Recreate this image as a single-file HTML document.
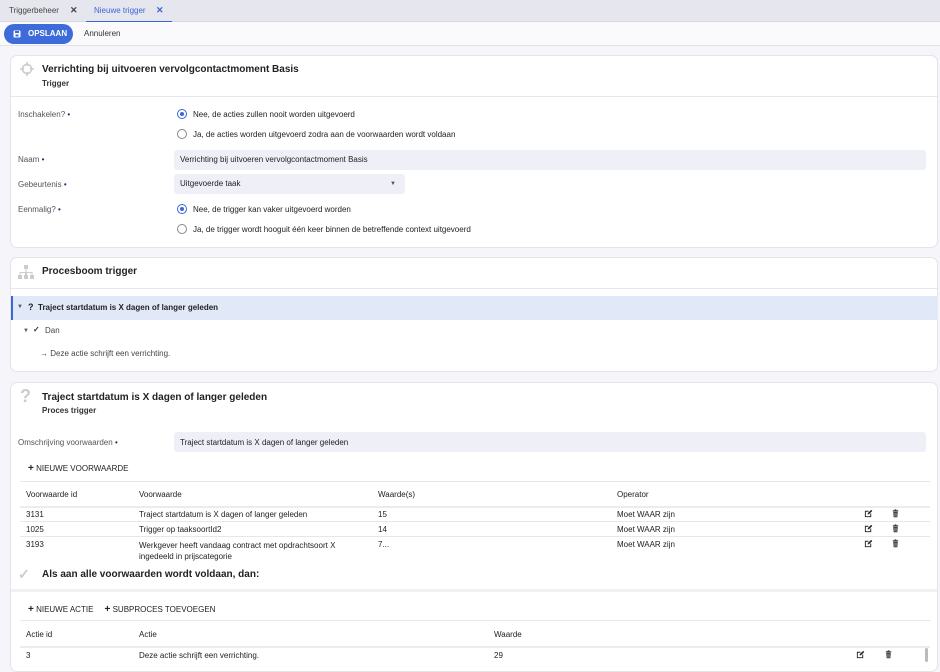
<!DOCTYPE html>
<html><head><meta charset="utf-8"><style>
*{box-sizing:border-box;margin:0;padding:0}
body{width:940px;height:662px;overflow:hidden;background:#f6f5fa;font-family:"Liberation Sans",sans-serif;font-size:8px;color:#222;position:relative}
.abs{position:absolute}
.tabs{left:0;top:0;width:940px;height:22px;background:#e6e6ee;border-bottom:1px solid #d8d8e0}
.tool{left:0;top:22px;width:940px;height:24px;background:#fafafd;border-bottom:1px solid #e2e2ea}
.card{position:absolute;left:10px;width:928px;background:#fff;border:1px solid #e3e3ea;border-radius:7px}
.t{position:absolute;white-space:nowrap}
.lbl{color:#555}
.req{color:#1a2a6a}
.radio{position:absolute;width:10px;height:10px;border-radius:50%;border:1px solid #888;background:#fff}
.radio.on{border-color:#3a66d6}
.radio.on:after{content:"";position:absolute;left:2px;top:2px;width:4px;height:4px;border-radius:50%;background:#3a66d6}
.inp{position:absolute;background:#efeff8;border-radius:3px}
.hr{position:absolute;height:1px;background:#e6e6ee}
.b{font-weight:bold}
.h{font-size:10px;font-weight:bold;color:#222}
</style></head><body>
<svg width="0" height="0" style="position:absolute"><defs>
<symbol id="ed" viewBox="0 0 10 10"><path d="M1 2h4v1H2v5h5V5h1v4H1z" fill="#222"/><path d="M4 6l0.3-1.5L8 1l1.2 1.2L5.5 5.8z" fill="#222"/></symbol>
<symbol id="tr" viewBox="0 0 10 10"><rect x="2" y="1.5" width="6" height="1.2" fill="#222"/><rect x="4" y="0.5" width="2" height="1" fill="#222"/><path d="M2.6 3.2h4.8l-0.4 6H3z" fill="#222"/><path d="M4 4v4.5M5 4v4.5M6 4v4.5" stroke="#fff" stroke-width="0.4"/></symbol>
</defs></svg>
<div class="abs tabs"></div>
<div class="t" style="left:9px;top:6px;color:#444">Triggerbeheer</div>
<div class="t b" style="left:70px;top:5px;color:#444;font-size:9px">✕</div>
<div class="t" style="left:94px;top:6px;color:#3a66d6">Nieuwe trigger</div>
<div class="t b" style="left:156px;top:5px;color:#3a66d6;font-size:9px">✕</div>
<div class="abs" style="left:86px;top:21px;width:86px;height:1px;background:#3a66d6"></div>
<div class="abs tool"></div>
<div class="abs" style="left:4px;top:24px;width:69px;height:20px;border-radius:10px;background:#3d6bd9"></div>
<svg class="abs" style="left:13px;top:30px" width="8" height="8" viewBox="0 0 8 8"><rect x="0.5" y="0.5" width="7" height="7" rx="1" fill="#fff"/><rect x="2" y="1" width="4" height="2" fill="#3d6bd9"/><rect x="2.5" y="4.5" width="3" height="2" fill="#3d6bd9"/></svg>
<div class="t b" style="left:28px;top:29px;color:#fff">OPSLAAN</div>
<div class="t" style="left:84px;top:29px;color:#333">Annuleren</div>

<div class="card" style="top:55px;height:193px"></div>
<svg class="abs" style="left:20px;top:62px" width="14" height="14" viewBox="0 0 14 14"><circle cx="7" cy="7" r="4.5" fill="none" stroke="#ccc" stroke-width="1.6"/><path d="M7 0v4M7 10v4M0 7h4M10 7h4" stroke="#ccc" stroke-width="1.6"/></svg>
<div class="t h" style="left:42px;top:64px">Verrichting bij uitvoeren vervolgcontactmoment Basis</div>
<div class="t b" style="left:42px;top:79px;color:#333">Trigger</div>
<div class="hr" style="left:11px;top:96px;width:926px"></div>
<div class="t lbl" style="left:18px;top:110px">Inschakelen? <span class="req">•</span></div>
<div class="radio on" style="left:177px;top:109px"></div><div class="t" style="left:193px;top:110px">Nee, de acties zullen nooit worden uitgevoerd</div>
<div class="radio" style="left:177px;top:129px"></div><div class="t" style="left:193px;top:130px">Ja, de acties worden uitgevoerd zodra aan de voorwaarden wordt voldaan</div>
<div class="t lbl" style="left:18px;top:155px">Naam <span class="req">•</span></div>
<div class="inp" style="left:174px;top:150px;width:752px;height:20px"></div>
<div class="t" style="left:180px;top:155px">Verrichting bij uitvoeren vervolgcontactmoment Basis</div>
<div class="t lbl" style="left:18px;top:180px">Gebeurtenis <span class="req">•</span></div>
<div class="inp" style="left:174px;top:174px;width:231px;height:20px"></div>
<div class="t" style="left:180px;top:179px">Uitgevoerde taak</div>
<div class="t" style="left:390px;top:181px;font-size:6px;color:#555">▼</div>
<div class="t lbl" style="left:18px;top:205px">Eenmalig? <span class="req">•</span></div>
<div class="radio on" style="left:177px;top:204px"></div><div class="t" style="left:193px;top:205px">Nee, de trigger kan vaker uitgevoerd worden</div>
<div class="radio" style="left:177px;top:224px"></div><div class="t" style="left:193px;top:225px">Ja, de trigger wordt hooguit één keer binnen de betreffende context uitgevoerd</div>

<div class="card" style="top:257px;height:115px"></div>
<svg class="abs" style="left:17px;top:265px" width="18" height="14" viewBox="0 0 18 14"><g fill="#ccc"><rect x="7" y="0" width="4" height="4"/><rect x="1" y="10" width="4" height="4"/><rect x="7" y="10" width="4" height="4"/><rect x="13" y="10" width="4" height="4"/><path d="M8.5 4h1v3h6v3h-1V8H10v2H8V8H3.5v2h-1V7h6z"/></g></svg>
<div class="t h" style="left:42px;top:266px">Procesboom trigger</div>
<div class="hr" style="left:11px;top:288px;width:926px"></div>
<div class="abs" style="left:11px;top:296px;width:927px;height:24px;background:#e1e9f9;border-left:2px solid #3a66d6"></div>
<div class="t" style="left:17px;top:304px;font-size:6px;color:#555">▼</div>
<div class="t b" style="left:28px;top:302px;font-size:9px">?</div>
<div class="t b" style="left:38px;top:303px">Traject startdatum is X dagen of langer geleden</div>
<div class="t" style="left:23px;top:328px;font-size:6px;color:#555">▼</div>
<div class="t b" style="left:33px;top:325px;color:#333">✓</div>
<div class="t" style="left:45px;top:326px;color:#444">Dan</div>
<div class="t" style="left:40px;top:349px;color:#444">→ Deze actie schrijft een verrichting.</div>

<div class="card" style="top:382px;height:290px"></div>
<div class="t b" style="left:20px;top:386px;font-size:18px;color:#ccc">?</div>
<div class="t h" style="left:42px;top:392px">Traject startdatum is X dagen of langer geleden</div>
<div class="t b" style="left:42px;top:406px;color:#333">Proces trigger</div>
<div class="t lbl" style="left:18px;top:438px">Omschrijving voorwaarden <span class="req">•</span></div>
<div class="inp" style="left:174px;top:432px;width:752px;height:20px"></div>
<div class="t" style="left:180px;top:438px">Traject startdatum is X dagen of langer geleden</div>
<div class="t" style="left:28px;top:463px"><b style="font-size:10px">+</b> NIEUWE VOORWAARDE</div>
<div class="hr" style="left:20px;top:481px;width:910px"></div>
<div class="t" style="left:26px;top:490px">Voorwaarde id</div><div class="t" style="left:139px;top:490px">Voorwaarde</div><div class="t" style="left:378px;top:490px">Waarde(s)</div><div class="t" style="left:617px;top:490px">Operator</div>
<div class="abs" style="left:20px;top:506px;width:910px;height:2px;background:#ebebf0"></div>
<div class="t" style="left:26px;top:510px">3131</div><div class="t" style="left:139px;top:510px">Traject startdatum is X dagen of langer geleden</div><div class="t" style="left:378px;top:510px">15</div><div class="t" style="left:617px;top:510px">Moet WAAR zijn</div>
<div class="hr" style="left:20px;top:521px;width:910px"></div>
<div class="t" style="left:26px;top:525px">1025</div><div class="t" style="left:139px;top:525px">Trigger op taaksoortId2</div><div class="t" style="left:378px;top:525px">14</div><div class="t" style="left:617px;top:525px">Moet WAAR zijn</div>
<div class="hr" style="left:20px;top:536px;width:910px"></div>
<div class="t" style="left:26px;top:540px">3193</div><div class="t" style="left:139px;top:540px;line-height:11px">Werkgever heeft vandaag contract met opdrachtsoort X<br>ingedeeld in prijscategorie</div><div class="t" style="left:378px;top:540px">7...</div><div class="t" style="left:617px;top:540px">Moet WAAR zijn</div>
<svg class="abs" style="left:864px;top:509px" width="9" height="9"><use href="#ed"/></svg><svg class="abs" style="left:891px;top:509px" width="9" height="9"><use href="#tr"/></svg>
<svg class="abs" style="left:864px;top:524px" width="9" height="9"><use href="#ed"/></svg><svg class="abs" style="left:891px;top:524px" width="9" height="9"><use href="#tr"/></svg>
<svg class="abs" style="left:864px;top:539px" width="9" height="9"><use href="#ed"/></svg><svg class="abs" style="left:891px;top:539px" width="9" height="9"><use href="#tr"/></svg>
<div class="t b" style="left:18px;top:566px;font-size:14px;color:#ccc">✓</div>
<div class="t h" style="left:42px;top:569px">Als aan alle voorwaarden wordt voldaan, dan:</div>
<div class="abs" style="left:11px;top:589px;width:926px;height:3px;background:#f0f0f5"></div>
<div class="t" style="left:28px;top:604px"><b style="font-size:10px">+</b> NIEUWE ACTIE &nbsp;&nbsp;&nbsp; <b style="font-size:10px">+</b> SUBPROCES TOEVOEGEN</div>
<div class="hr" style="left:20px;top:620px;width:910px"></div>
<div class="t" style="left:26px;top:630px">Actie id</div><div class="t" style="left:139px;top:630px">Actie</div><div class="t" style="left:494px;top:630px">Waarde</div>
<div class="abs" style="left:20px;top:646px;width:910px;height:2px;background:#ebebf0"></div>
<div class="t" style="left:26px;top:651px">3</div><div class="t" style="left:139px;top:651px">Deze actie schrijft een verrichting.</div><div class="t" style="left:494px;top:651px">29</div>
<svg class="abs" style="left:856px;top:650px" width="9" height="9"><use href="#ed"/></svg><svg class="abs" style="left:884px;top:650px" width="9" height="9"><use href="#tr"/></svg>
<div class="abs" style="left:925px;top:648px;width:3px;height:14px;background:#bbb;border-radius:2px"></div>
</body></html>
